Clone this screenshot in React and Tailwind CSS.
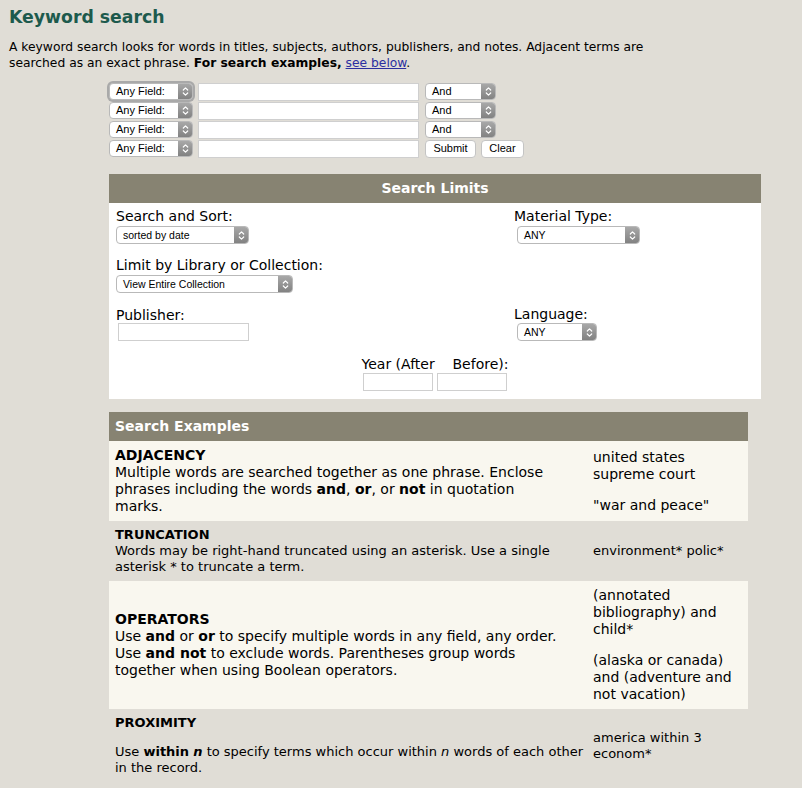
import React from "react";

function Chev() {
  return (
    <svg width="7" height="11" viewBox="0 0 7 11" fill="none" stroke="white" strokeWidth="1.2" strokeLinecap="round" strokeLinejoin="round">
      <path d="M1.3 4 L3.5 1.8 L5.7 4" />
      <path d="M1.3 7 L3.5 9.2 L5.7 7" />
    </svg>
  );
}

function Sel({ w, label, ring, small }) {
  return (
    <div
      className={`flex overflow-hidden rounded-[4px] border border-[#b9b9b9] bg-white ${w} ${
        small ? "h-[18px]" : "h-[17px]"
      } ${ring ? "shadow-[0_0_0_2px_#a9a9a9]" : ""}`}
    >
      <span
        className={`flex-1 whitespace-nowrap pl-[6px] font-['Liberation_Sans',Arial,sans-serif] text-black ${
          small ? "text-[10.5px] leading-[16px]" : "text-[11px] leading-[15px]"
        }`}
      >
        {label}
      </span>
      <span className="flex w-[14px] items-center justify-center bg-gradient-to-b from-[#a8a8a8] to-[#828282]">
        <Chev />
      </span>
    </div>
  );
}

function Btn({ children, w }) {
  return (
    <div
      className={`flex h-[18px] items-center justify-center rounded-[4px] border border-[#c4c4c4] bg-white font-['Liberation_Sans',Arial,sans-serif] text-[11px] text-black ${w}`}
    >
      {children}
    </div>
  );
}

function Input({ w }) {
  return <div className={`h-[18px] border border-[#cfcfcf] bg-white ${w}`} />;
}

function SearchRow({ first, last }) {
  return (
    <div className="flex h-[19px] items-center">
      <Sel w="w-[84px]" label="Any Field:" ring={first} />
      <div className="ml-[5px]">
        <Input w="w-[221px]" />
      </div>
      <div className="ml-[6px] flex gap-[5px]">
        {last ? (
          <>
            <Btn w="w-[51px]">Submit</Btn>
            <Btn w="w-[43px]">Clear</Btn>
          </>
        ) : (
          <Sel w="w-[71px]" label="And" />
        )}
      </div>
    </div>
  );
}

function Label({ children }) {
  return <div className="text-[14px] leading-[17px] text-black">{children}</div>;
}

function L({ children }) {
  return <span className="block whitespace-nowrap">{children}</span>;
}

export default function App() {
  return (
    <div className="min-h-[788px] bg-[#e0ddd6] font-['DejaVu_Sans',Verdana,sans-serif] text-black">
      <div className="px-[9px] pt-[6px]">
        <h1 className="text-[17.3px] font-bold leading-[22px] text-[#1d5a4d]">Keyword search</h1>
        <p className="mt-[11px] text-[12.3px] leading-[16px]">
          <L>
            A keyword search looks for words in titles, subjects, authors, publishers, and notes. Adjacent terms are
          </L>
          <L>
            searched as an exact phrase. <b>For search examples,</b>{" "}
            <a className="text-[#2b2fa0] underline">see below</a>.
          </L>
        </p>
      </div>

      <div className="ml-[109px] mt-[11px] flex flex-col">
        <SearchRow first />
        <SearchRow />
        <SearchRow />
        <SearchRow last />
      </div>

      <div className="ml-[109px] mt-[16px] w-[652px]">
        <div className="flex h-[29px] items-center justify-center bg-[#878372] text-[14px] font-bold text-white">
          Search Limits
        </div>
        <div className="bg-white px-[7px] pb-[8px] pt-[5px]">
          <div className="grid grid-cols-[398px_1fr]">
            <div>
              <Label>Search and Sort:</Label>
              <div className="mt-[1px]">
                <Sel w="w-[133px]" label="sorted by date" small />
              </div>
            </div>
            <div>
              <Label>Material Type:</Label>
              <div className="ml-[3px] mt-[1px]">
                <Sel w="w-[123px]" label="ANY" small />
              </div>
            </div>
            <div className="col-span-2 mt-[13px]">
              <Label>Limit by Library or Collection:</Label>
              <div className="mt-[1px]">
                <Sel w="w-[177px]" label="View Entire Collection" small />
              </div>
            </div>
            <div className="mt-[14px]">
              <Label>Publisher:</Label>
              <div className="ml-[2px] mt-[-1px]">
                <Input w="w-[131px]" />
              </div>
            </div>
            <div className="mt-[13px]">
              <Label>Language:</Label>
              <div className="ml-[3px]">
                <Sel w="w-[80px]" label="ANY" small />
              </div>
            </div>
          </div>
          <div className="mt-[15px] flex flex-col items-center">
            <Label>Year (After&nbsp;&nbsp;&nbsp;&nbsp;Before):</Label>
            <div className="flex gap-[4px]">
              <Input w="w-[70px]" />
              <Input w="w-[70px]" />
            </div>
          </div>
        </div>
      </div>

      <div className="ml-[109px] mt-[13px] w-[639px]">
        <div className="flex h-[29px] items-center bg-[#878372] px-[6px] text-[14px] font-bold text-white">
          Search Examples
        </div>

        <div className="grid grid-cols-[478px_161px] items-center bg-[#f9f7ef] py-[6px]">
          <div className="pl-[6px] text-[14px] leading-[17px]">
            <L>
              <b>ADJACENCY</b>
            </L>
            <L>Multiple words are searched together as one phrase. Enclose</L>
            <L>
              phrases including the words <b>and</b>, <b>or</b>, or <b>not</b> in quotation
            </L>
            <L>marks.</L>
          </div>
          <div className="px-[6px] text-[14px] leading-[17px]">
            <p>
              united states
              <br />
              supreme court
            </p>
            <p className="mt-[14px]">"war and peace"</p>
          </div>
        </div>

        <div className="grid grid-cols-[478px_161px] items-center py-[6px]">
          <div className="pl-[6px] text-[13px] leading-[16px]">
            <L>
              <b>TRUNCATION</b>
            </L>
            <L>Words may be right-hand truncated using an asterisk. Use a single</L>
            <L>asterisk * to truncate a term.</L>
          </div>
          <div className="px-[6px] text-[13px] leading-[16px]">environment* polic*</div>
        </div>

        <div className="grid grid-cols-[478px_161px] items-center bg-[#f9f7ef] py-[6px]">
          <div className="pl-[6px] text-[14px] leading-[17px]">
            <L>
              <b>OPERATORS</b>
            </L>
            <L>
              Use <b>and</b> or <b>or</b> to specify multiple words in any field, any order.
            </L>
            <L>
              Use <b>and not</b> to exclude words. Parentheses group words
            </L>
            <L>together when using Boolean operators.</L>
          </div>
          <div className="px-[6px] text-[14px] leading-[17px]">
            <p>(annotated bibliography) and child*</p>
            <p className="mt-[14px]">(alaska or canada) and (adventure and not vacation)</p>
          </div>
        </div>

        <div className="grid grid-cols-[478px_161px] items-center py-[6px]">
          <div className="pl-[6px] text-[13px] leading-[16px]">
            <L>
              <b>PROXIMITY</b>
            </L>
            <div className="mt-[13px]">
              <L>
                Use <b>within</b>{" "}
                <b>
                  <i>n</i>
                </b>{" "}
                to specify terms which occur within <i>n</i> words of each other
              </L>
              <L>in the record.</L>
            </div>
          </div>
          <div className="px-[6px] text-[13px] leading-[16px]">america within 3 econom*</div>
        </div>
      </div>
    </div>
  );
}
